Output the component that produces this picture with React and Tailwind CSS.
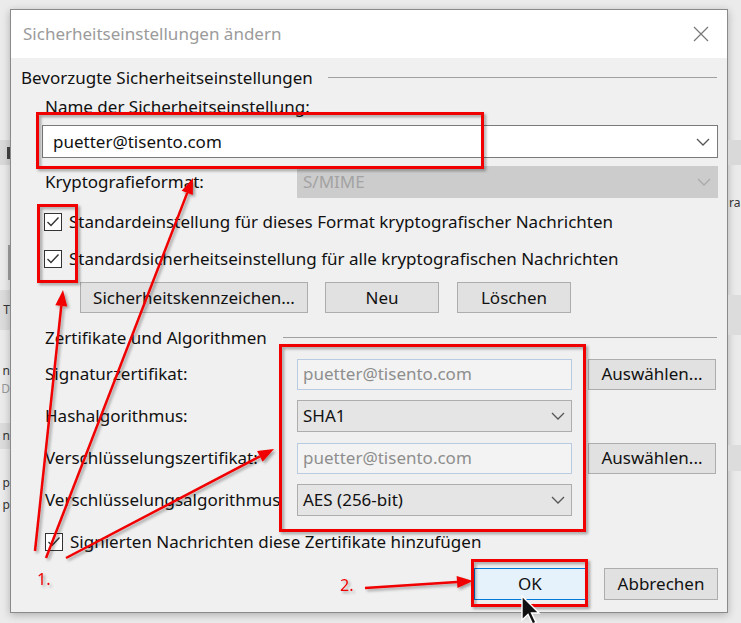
import React from 'react';

const Chevron = ({ color = '#555' }) => (
  <svg width="14" height="8" viewBox="0 0 14 8" className="shrink-0">
    <polyline points="1,1 7,7 13,1" fill="none" stroke={color} strokeWidth="1.3" />
  </svg>
);

const Check = () => (
  <span className="w-[18px] h-[18px] shrink-0 border border-[#333] bg-white flex items-center justify-center">
    <svg width="14" height="12" viewBox="0 0 14 12">
      <polyline points="1.5,6 5,9.5 12.5,1.5" fill="none" stroke="#333" strokeWidth="1.4" />
    </svg>
  </span>
);

const Btn = ({ children, className = '' }) => (
  <button className={`h-[31px] border border-[#adadad] bg-[#e1e1e1] text-[#111] flex items-center justify-center ${className}`}>
    {children}
  </button>
);

const Combo = ({ value, className = '' }) => (
  <div className={`h-[32px] border border-[#adadad] bg-[#e5e5e5] flex items-center justify-between pl-[5px] pr-[6px] ${className}`}>
    <span>{value}</span>
    <Chevron />
  </div>
);

const ReadOnly = ({ value }) => (
  <div className="w-[275px] h-[31px] border border-[#b9cbe0] bg-[#f3f3f3] flex items-center pl-[5px] text-[#8e8e8e]">
    {value}
  </div>
);

const Row = ({ label, children }) => (
  <div className="flex items-center h-[32px]">
    <span className="w-[252px] shrink-0 whitespace-nowrap">{label}</span>
    {children}
  </div>
);

// strips of the main window behind the dialog
const LeftBehind = () => (
  <div className="w-[10px] shrink-0 flex flex-col text-[12px] text-[#333]">
    <div className="mt-[131px] h-[25px] bg-[#d9d9d9] flex justify-end items-center"><span className="w-[3px] h-[12px] bg-[#444]" /></div>
    <div className="mt-[80px] h-[35px] flex justify-end"><span className="w-[2px] h-full bg-[#a0a0a0]" /></div>
    <div className="mt-[10px] h-[40px] bg-[#dcdcdc] flex justify-end items-center leading-none">T</div>
    <div className="mt-[35px] flex justify-end leading-none">n</div>
    <div className="mt-[6px] flex justify-end leading-none text-[#999]">D</div>
    <div className="mt-[28px] h-[26px] bg-[#dcdcdc] flex justify-end items-center leading-none">n</div>
    <div className="mt-[28px] flex justify-end leading-none">p</div>
    <div className="mt-[10px] flex justify-end leading-none">p</div>
  </div>
);

const RightBehind = () => (
  <div className="flex-1 flex flex-col text-[12px] text-[#333]">
    <div className="mt-[131px] h-[25px] bg-[#d9d9d9]" />
    <div className="mt-[32px] pl-[1px] leading-none">ra</div>
    <div className="mt-[86px] h-[40px] bg-[#dcdcdc]" />
    <div className="mt-[110px] h-[26px] bg-[#dcdcdc]" />
  </div>
);

const Annotations = () => {
  const red = '#f00000';
  const arrow = (x1, y1, x2, y2, key) => {
    const a = Math.atan2(y2 - y1, x2 - x1);
    const len = 16;
    const w = 6;
    const bx = x2 - len * Math.cos(a);
    const by = y2 - len * Math.sin(a);
    const px = -Math.sin(a) * w;
    const py = Math.cos(a) * w;
    return (
      <g key={key}>
        <line x1={x1} y1={y1} x2={bx} y2={by} stroke={red} strokeWidth="2.5" />
        <polygon points={`${x2},${y2} ${bx + px},${by + py} ${bx - px},${by - py}`} fill={red} />
      </g>
    );
  };
  return (
    <svg className="absolute inset-0 pointer-events-none" width="741" height="623">
      <defs>
        <filter id="shade" x="-10%" y="-10%" width="120%" height="120%">
          <feDropShadow dx="2" dy="2" stdDeviation="1.5" floodColor="#000" floodOpacity="0.35" />
        </filter>
      </defs>
      <g filter="url(#shade)" fill="none">
        <rect x="37.5" y="113.5" width="445" height="54" stroke={red} strokeWidth="3" />
        <rect x="38.5" y="205.5" width="38" height="76" stroke={red} strokeWidth="3" />
        <rect x="280.5" y="345.5" width="304" height="185" stroke={red} strokeWidth="3" />
        <rect x="472.5" y="560.5" width="114" height="45" stroke={red} strokeWidth="3" />
        {arrow(35, 551, 63, 290, 'a1')}
        {arrow(46, 558, 193, 178, 'a2')}
        {arrow(66, 558, 274, 449, 'a3')}
        {arrow(365, 588, 473, 581, 'a4')}
        <text x="37" y="585" fill={red} fontSize="16" fontFamily="Noto Sans, sans-serif">1.</text>
        <text x="340" y="591" fill={red} fontSize="16" fontFamily="Noto Sans, sans-serif">2.</text>
      </g>
    </svg>
  );
};

const Cursor = () => (
  <svg className="absolute left-[520px] top-[595px] pointer-events-none" width="24" height="32" viewBox="0 0 24 32">
    <polygon points="2,1 2,25 8,19.5 12.5,29 16,27.5 11.5,18 19,18" fill="#111" stroke="#fff" strokeWidth="1.4" />
  </svg>
);

export default function App() {
  return (
    <div className="relative w-[741px] h-[623px] overflow-hidden bg-[#ebebeb] flex pt-[9px] font-['Noto_Sans',sans-serif] text-[17px] text-[#111]">
      <LeftBehind />

      <div className="w-[718px] h-[604px] shrink-0 border border-[#8a8a8a] shadow-[0_2px_8px_rgba(0,0,0,0.25)] flex flex-col bg-[#f0f0f0]">
        <div className="h-[48px] bg-white flex items-center justify-between pl-[12px] pr-[18px]">
          <span className="text-[17px] text-[#9b9b9b]">Sicherheitseinstellungen ändern</span>
          <svg width="16" height="16" viewBox="0 0 16 16">
            <path d="M1 1 L15 15 M15 1 L1 15" stroke="#777" strokeWidth="1.2" />
          </svg>
        </div>

        <div className="flex-1 flex flex-col pl-[10px] pr-[9px]">
          <div className="mt-[9px] h-[22px] flex items-center">
            <span className="whitespace-nowrap">Bevorzugte Sicherheitseinstellungen</span>
            <span className="flex-1 ml-[15px] mr-[1px] h-[2px] border-t border-[#a0a0a0] border-b-white" />
          </div>

          <div className="mt-[7px] h-[22px] pl-[24px] flex items-center">Name der Sicherheitseinstellung:</div>

          <div className="mt-[7px] ml-[21px] h-[33px] border border-[#7a7a7a] bg-white flex items-center justify-between pl-[10px] pr-[7px]">
            <span>puetter@tisento.com</span>
            <Chevron />
          </div>

          <div className="mt-[8px] pl-[24px]">
            <Row label="Kryptografieformat:">
              <div className="flex-1 h-[32px] bg-[#cccccc] flex items-center justify-between pl-[6px] pr-[7px] text-[#a3a3a3]">
                <span>S/MIME</span>
                <Chevron color="#aaa" />
              </div>
            </Row>
          </div>

          <div className="mt-[13px] h-[22px] pl-[23px] flex items-center gap-[7px]">
            <Check />
            <span className="whitespace-nowrap">Standardeinstellung für dieses Format kryptografischer Nachrichten</span>
          </div>
          <div className="mt-[15px] h-[22px] pl-[23px] flex items-center gap-[7px]">
            <Check />
            <span className="whitespace-nowrap">Standardsicherheitseinstellung für alle kryptografischen Nachrichten</span>
          </div>

          <div className="mt-[12px] pl-[59px] flex gap-[17px]">
            <Btn className="w-[228px]">Sicherheitskennzeichen...</Btn>
            <Btn className="w-[114px]">Neu</Btn>
            <Btn className="w-[114px] ml-[1px]">Löschen</Btn>
          </div>

          <div className="mt-[14px] h-[22px] pl-[24px] flex items-center">
            <span className="whitespace-nowrap">Zertifikate und Algorithmen</span>
            <span className="flex-1 ml-[16px] mr-[1px] h-[2px] border-t border-[#a0a0a0] border-b-white" />
          </div>

          <div className="mt-[9px] pl-[24px] flex flex-col gap-[10px]">
            <Row label="Signaturzertifikat:">
              <ReadOnly value="puetter@tisento.com" />
              <Btn className="w-[128px] ml-[16px]">Auswählen...</Btn>
            </Row>
            <Row label="Hashalgorithmus:">
              <Combo value="SHA1" className="w-[275px]" />
            </Row>
            <Row label="Verschlüsselungszertifikat:">
              <ReadOnly value="puetter@tisento.com" />
              <Btn className="w-[128px] ml-[16px]">Auswählen...</Btn>
            </Row>
            <Row label="Verschlüsselungsalgorithmus">
              <Combo value="AES (256-bit)" className="w-[275px]" />
            </Row>
          </div>

          <div className="mt-[15px] h-[22px] pl-[24px] flex items-center gap-[7px]">
            <Check />
            <span className="whitespace-nowrap">Signierten Nachrichten diese Zertifikate hinzufügen</span>
          </div>

          <div className="mt-[15px] flex justify-end gap-[18px]">
            <button className="w-[112px] h-[32px] border border-[#0078d7] bg-[#e5f1fb] flex items-center justify-center">OK</button>
            <Btn className="w-[114px] h-[32px]">Abbrechen</Btn>
          </div>
        </div>
      </div>

      <RightBehind />
      <Annotations />
      <Cursor />
    </div>
  );
}
